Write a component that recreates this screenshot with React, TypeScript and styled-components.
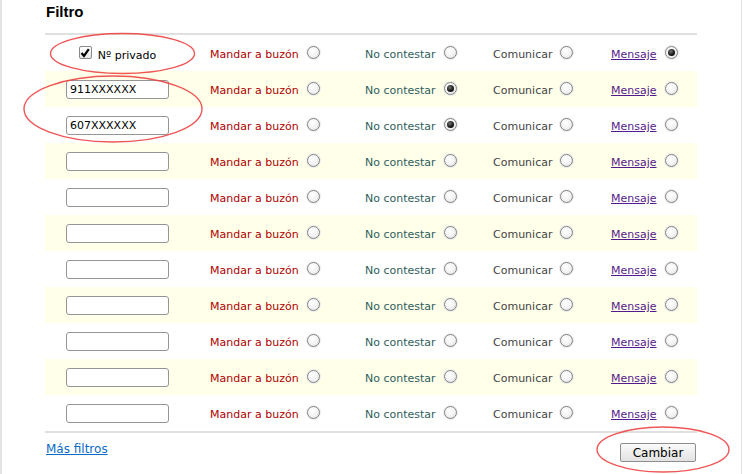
import React from 'react';
import styled, { createGlobalStyle } from 'styled-components';

type Choice = 'buzon' | 'nocontestar' | 'comunicar' | 'mensaje';

interface Rule {
  number: string;
  choice: Choice | null;
}

const rules: Rule[] = [
  { number: '911XXXXXX', choice: 'nocontestar' },
  { number: '607XXXXXX', choice: 'nocontestar' },
  { number: '', choice: null },
  { number: '', choice: null },
  { number: '', choice: null },
  { number: '', choice: null },
  { number: '', choice: null },
  { number: '', choice: null },
  { number: '', choice: null },
  { number: '', choice: null },
];

const GlobalStyle = createGlobalStyle`
  html, body {
    margin: 0;
    padding: 0;
    background: #ffffff;
  }
  body {
    font-family: "DejaVu Sans", Verdana, sans-serif;
  }
`;

const Page = styled.div`
  position: relative;
  box-sizing: border-box;
  width: 742px;
  height: 474px;
  border-left: 2px solid #e3e3e3;
  border-right: 1px solid #e3e3e3;
  padding: 0 44px 0 43px;
`;

const Title = styled.h2`
  margin: 0;
  padding: 3px 0 0 1px;
  height: 30px;
  font-family: "Liberation Sans", Arial, sans-serif;
  font-size: 15px;
  font-weight: bold;
  line-height: 18px;
  color: #000;
`;

const Table = styled.div`
  border-top: 2px solid #e0e0e0;
  border-bottom: 2px solid #e0e0e0;
`;

const Row = styled.div<{ $striped: boolean }>`
  display: grid;
  grid-template-columns: 165px 155px 128px 118px 1fr;
  align-items: center;
  height: 36px;
  background: ${(p) => (p.$striped ? '#ffffea' : '#ffffff')};
`;

const FirstCell = styled.div`
  display: flex;
  align-items: center;
  justify-content: center;
  padding-right: 20px;
`;

const NumberInput = styled.input`
  box-sizing: border-box;
  width: 103px;
  height: 19px;
  margin: 0;
  padding: 0 3px;
  border: 1px solid #959595;
  border-radius: 3px;
  background: #fff;
  font-family: "DejaVu Sans", sans-serif;
  font-size: 11px;
  color: #000;
  outline: none;
`;

const CheckBox = styled.span`
  box-sizing: border-box;
  display: inline-flex;
  align-items: center;
  justify-content: center;
  width: 13px;
  height: 13px;
  margin: -1px 6px 0 0;
  border: 1px solid #8a8a8a;
  border-radius: 2px;
  background: linear-gradient(#ffffff, #e6e6e6);
`;

const PrivateLabel = styled.span`
  padding-top: 4px;
  font-size: 11px;
  color: #000;
`;

const OptionCell = styled.div`
  display: flex;
  align-items: center;
  gap: 8px;
  margin-top: 3px;
`;

const OptionLabel = styled.span<{ $color: string }>`
  font-size: 11px;
  color: ${(p) => p.$color};
`;

const OptionLink = styled.a`
  font-size: 11px;
  color: #551a8b;
  text-decoration: underline;
  cursor: pointer;
`;

const Radio = styled.span<{ $checked: boolean }>`
  box-sizing: border-box;
  display: inline-flex;
  align-items: center;
  justify-content: center;
  width: 13px;
  height: 13px;
  margin-bottom: 4px;
  border: 1px solid #838383;
  border-radius: 50%;
  background: radial-gradient(circle at 40% 35%, #ffffff 0%, #f2f2f2 55%, #d8d8d8 100%);
  box-shadow: 0 0 0 1px #ececec;

  &::after {
    content: '';
    display: ${(p) => (p.$checked ? 'block' : 'none')};
    width: 7px;
    height: 7px;
    border-radius: 50%;
    background: radial-gradient(circle at 40% 35%, #777 0%, #1a1a1a 55%, #000 100%);
  }
`;

const Footer = styled.div`
  display: flex;
  justify-content: space-between;
  align-items: flex-start;
  padding: 8px 1px 0 1px;
`;

const MoreLink = styled.a`
  margin-top: 1px;
  font-size: 12px;
  color: #0b6bc8;
  text-decoration: underline;
  cursor: pointer;
`;

const Button = styled.button`
  box-sizing: border-box;
  width: 76px;
  height: 19px;
  margin-top: 2px;
  padding: 0;
  border: 1px solid #8e8e8e;
  border-radius: 2px;
  background: linear-gradient(#fafafa, #e2e2e2);
  font-family: "DejaVu Sans", sans-serif;
  font-size: 12px;
  color: #000;
`;

const Marks = styled.svg`
  position: absolute;
  left: -2px;
  top: 0;
  pointer-events: none;
`;

const Option = ({
  label,
  color,
  link,
  checked,
}: {
  label: string;
  color?: string;
  link?: boolean;
  checked: boolean;
}) => (
  <OptionCell>
    {link ? (
      <OptionLink>{label}</OptionLink>
    ) : (
      <OptionLabel $color={color || '#444'}>{label}</OptionLabel>
    )}
    <Radio $checked={checked} />
  </OptionCell>
);

const Options = ({ choice }: { choice: Choice | null }) => (
  <>
    <Option label='Mandar a buzón' color='#b00000' checked={choice === 'buzon'} />
    <Option label='No contestar' color='#2f5e5e' checked={choice === 'nocontestar'} />
    <Option label='Comunicar' color='#444444' checked={choice === 'comunicar'} />
    <Option label='Mensaje' link checked={choice === 'mensaje'} />
  </>
);

const App = () => {
  return (
    <>
      <GlobalStyle />
      <Page>
        <Title>Filtro</Title>
        <Table>
          <Row $striped={false}>
            <FirstCell>
              <CheckBox>
                <svg width='10' height='10' viewBox='0 0 10 10'>
                  <path d='M1.5 5 L4 8 L8.8 1.2' fill='none' stroke='#000' strokeWidth='2.2' />
                </svg>
              </CheckBox>
              <PrivateLabel>Nº privado</PrivateLabel>
            </FirstCell>
            <Options choice='mensaje' />
          </Row>
          {rules.map((rule, i) => (
            <Row key={i} $striped={i % 2 === 0}>
              <FirstCell>
                <NumberInput defaultValue={rule.number} />
              </FirstCell>
              <Options choice={rule.choice} />
            </Row>
          ))}
        </Table>
        <Footer>
          <MoreLink>Más filtros</MoreLink>
          <Button>Cambiar</Button>
        </Footer>
        <Marks width='743' height='474' viewBox='0 0 743 474'>
          <g fill='none' stroke='#ee4444' strokeWidth='1.4' opacity='0.9'>
            <ellipse cx='122.5' cy='53.5' rx='72' ry='20' />
            <ellipse cx='113' cy='109' rx='89' ry='33' />
            <ellipse cx='663' cy='449.5' rx='66' ry='22.5' />
          </g>
        </Marks>
      </Page>
    </>
  );
};

export default App;
